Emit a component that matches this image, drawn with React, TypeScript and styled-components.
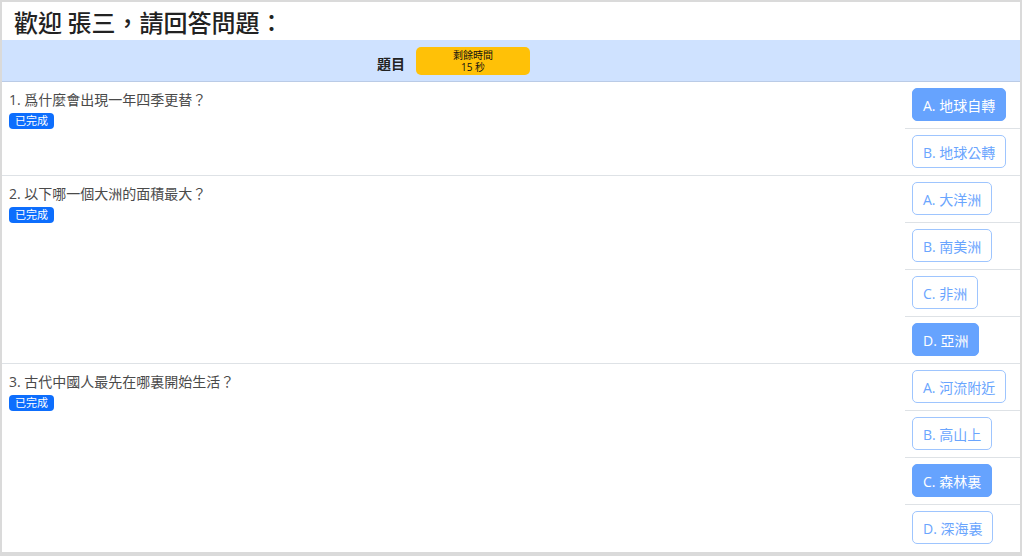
import React from "react";
import styled, { createGlobalStyle } from "styled-components";

const Global = createGlobalStyle`
  html, body { margin: 0; padding: 0; background: #fff; }
  body { font-family: "Open Sans", "Noto Sans CJK TC", sans-serif; }
  * { box-sizing: border-box; }
`;

const Frame = styled.div`
  width: 1022px;
  height: 556px;
  border: 2px solid #dadada;
  border-bottom-width: 4px;
  overflow: hidden;
  display: flex;
  flex-direction: column;
`;

const Title = styled.h1`
  margin: 0;
  height: 38px;
  padding: 0 12px;
  display: flex;
  align-items: center;
  font-family: "Noto Sans CJK TC", "Noto Sans CJK JP", sans-serif;
  font-size: 24px;
  font-weight: 500;
  color: #222;
  white-space: pre;
`;

const HeaderRow = styled.div`
  display: grid;
  grid-template-columns: 1fr 115px;
  height: 42px;
  background: #cfe2ff;
  border-bottom: 1px solid #bacbe6;
`;

const HeaderCell = styled.div`
  display: flex;
  align-items: center;
  justify-content: center;
  gap: 11px;
  font-size: 14px;
  font-weight: 700;
  color: #222;
  padding-top: 4px;
`;

const Timer = styled.div`
  width: 114px;
  height: 28px;
  margin-top: -4px;
  background: #ffc107;
  border-radius: 5px;
  display: flex;
  flex-direction: column;
  align-items: center;
  justify-content: center;
  font-size: 10px;
  font-weight: 400;
  line-height: 12px;
  color: #111;
`;

const QuestionRow = styled.div<{ $last?: boolean }>`
  display: grid;
  grid-template-columns: 1fr 115px;
  border-bottom: ${(p) => (p.$last ? "none" : "1px solid #dee2e6")};
`;

const QuestionCell = styled.div`
  padding: 7px 7px;
  display: flex;
  flex-direction: column;
  align-items: flex-start;
`;

const QuestionText = styled.div`
  font-size: 14px;
  line-height: 21px;
  color: #4a4a4a;
`;

const Badge = styled.span`
  margin-top: 3px;
  background: #0d6efd;
  color: #fff;
  font-size: 11px;
  line-height: 16px;
  height: 16px;
  padding: 0 6px;
  border-radius: 4px;
`;

const Options = styled.div`
  display: flex;
  flex-direction: column;
`;

const OptionCell = styled.div`
  height: 47px;
  padding: 6px 7px 0;
  border-bottom: 1px solid #dee2e6;
  &:last-child {
    border-bottom: none;
    height: 46px;
  }
`;

const OptionButton = styled.button<{ $selected?: boolean }>`
  height: 33px;
  padding: 0 10px;
  border-radius: 5px;
  font-family: "Open Sans", "Noto Sans CJK TC", sans-serif;
  font-size: 14px;
  cursor: default;
  border: 1px solid ${(p) => (p.$selected ? "#66a3fe" : "#9ec5fe")};
  background: ${(p) => (p.$selected ? "#66a3fe" : "#fff")};
  color: ${(p) => (p.$selected ? "#fff" : "#6aa5fe")};
`;

type Q = { text: string; options: string[]; selected: number };

const questions: Q[] = [
  { text: "1. 爲什麼會出現一年四季更替？", options: ["A. 地球自轉", "B. 地球公轉"], selected: 0 },
  { text: "2. 以下哪一個大洲的面積最大？", options: ["A. 大洋洲", "B. 南美洲", "C. 非洲", "D. 亞洲"], selected: 3 },
  { text: "3. 古代中國人最先在哪裏開始生活？", options: ["A. 河流附近", "B. 高山上", "C. 森林裏", "D. 深海裏"], selected: 2 },
];

export default function App() {
  return (
    <Frame lang="zh-Hant-TW">
      <Global />
      <Title>歡迎 張三，請回答問題：</Title>
      <HeaderRow>
        <HeaderCell>
          <span>題目</span>
          <Timer>
            <span>剩餘時間</span>
            <span>15 秒</span>
          </Timer>
        </HeaderCell>
        <div />
      </HeaderRow>
      {questions.map((q, i) => (
        <QuestionRow key={i} $last={i === questions.length - 1}>
          <QuestionCell>
            <QuestionText>{q.text}</QuestionText>
            <Badge>已完成</Badge>
          </QuestionCell>
          <Options>
            {q.options.map((o, j) => (
              <OptionCell key={j}>
                <OptionButton $selected={j === q.selected}>{o}</OptionButton>
              </OptionCell>
            ))}
          </Options>
        </QuestionRow>
      ))}
    </Frame>
  );
}
